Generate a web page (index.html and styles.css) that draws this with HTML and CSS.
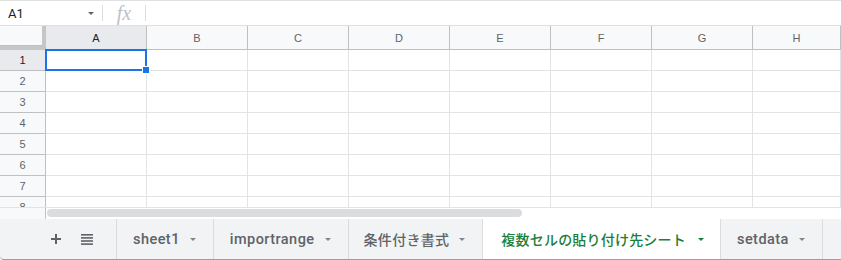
FILE: index.html
```html
<!DOCTYPE html>
<html lang="ja">
<head>
<meta charset="utf-8">
<title>Sheet</title>
<link rel="stylesheet" href="styles.css">
</head>
<body>
<div class="app">
  <div class="formula-bar">
    <div class="name-box">
      <span class="name-text">A1</span>
      <span class="caret"></span>
    </div>
    <div class="fx-box"><span class="fx">fx</span></div>
    <div class="formula-input"></div>
  </div>

  <div class="sheet">
    <div class="corner"></div>
    <div class="ch sel">A</div><div class="ch">B</div><div class="ch">C</div><div class="ch">D</div><div class="ch">E</div><div class="ch">F</div><div class="ch">G</div><div class="ch">H</div>

    <div class="rh sel">1</div><div class="c a1"><div class="selection"><span class="handle"></span></div></div><div class="c"></div><div class="c"></div><div class="c"></div><div class="c"></div><div class="c"></div><div class="c"></div><div class="c"></div>
    <div class="rh">2</div><div class="c"></div><div class="c"></div><div class="c"></div><div class="c"></div><div class="c"></div><div class="c"></div><div class="c"></div><div class="c"></div>
    <div class="rh">3</div><div class="c"></div><div class="c"></div><div class="c"></div><div class="c"></div><div class="c"></div><div class="c"></div><div class="c"></div><div class="c"></div>
    <div class="rh">4</div><div class="c"></div><div class="c"></div><div class="c"></div><div class="c"></div><div class="c"></div><div class="c"></div><div class="c"></div><div class="c"></div>
    <div class="rh">5</div><div class="c"></div><div class="c"></div><div class="c"></div><div class="c"></div><div class="c"></div><div class="c"></div><div class="c"></div><div class="c"></div>
    <div class="rh">6</div><div class="c"></div><div class="c"></div><div class="c"></div><div class="c"></div><div class="c"></div><div class="c"></div><div class="c"></div><div class="c"></div>
    <div class="rh">7</div><div class="c"></div><div class="c"></div><div class="c"></div><div class="c"></div><div class="c"></div><div class="c"></div><div class="c"></div><div class="c"></div>
    <div class="rh">8</div><div class="c"></div><div class="c"></div><div class="c"></div><div class="c"></div><div class="c"></div><div class="c"></div><div class="c"></div><div class="c"></div>
  </div>

  <div class="hscroll">
    <div class="hscroll-left"></div>
    <div class="hscroll-track"><div class="thumb"></div></div>
  </div>

  <div class="tabbar">
    <div class="tab-controls">
      <svg class="icon-plus" width="10" height="10" viewBox="0 0 10 10"><rect x="4" y="0" width="2" height="10" fill="#5f6368"/><rect x="0" y="4" width="10" height="2" fill="#5f6368"/></svg>
      <svg class="icon-list" width="12" height="11" viewBox="0 0 12 11"><rect x="0" y="0" width="12" height="1.6" fill="#5f6368"/><rect x="0" y="3.1" width="12" height="1.6" fill="#5f6368"/><rect x="0" y="6.2" width="12" height="1.6" fill="#5f6368"/><rect x="0" y="9.3" width="12" height="1.6" fill="#5f6368"/></svg>
    </div>
    <div class="tab latin"><span class="tab-name">sheet1</span><span class="tab-caret"></span></div>
    <div class="tab latin"><span class="tab-name">importrange</span><span class="tab-caret"></span></div>
    <div class="tab"><span class="tab-name">条件付き書式</span><span class="tab-caret"></span></div>
    <div class="tab active"><span class="tab-name">複数セルの貼り付け先シート</span><span class="tab-caret"></span></div>
    <div class="tab latin"><span class="tab-name">setdata</span><span class="tab-caret"></span></div>
  </div>
</div>
</body>
</html>
```

FILE: styles.css
```css
* { box-sizing: border-box; }
html, body { margin: 0; padding: 0; }
body {
  width: 841px;
  height: 260px;
  overflow: hidden;
  background: #ffffff;
  font-family: Roboto, "Liberation Sans", "Noto Sans CJK JP", sans-serif;
}
.app { width: 841px; height: 260px; display: flex; flex-direction: column; }

/* formula bar */
.formula-bar {
  height: 26px;
  flex: 0 0 26px;
  display: flex;
  align-items: center;
  border-top: 1px solid #e0e0e0;
  border-bottom: 1px solid #e0e0e0;
}
.name-box {
  width: 102px;
  height: 100%;
  display: flex;
  align-items: center;
  padding-left: 8px;
}
.name-text { font-size: 13px; color: #202124; flex: 1; }
.caret {
  width: 0; height: 0;
  border-left: 3px solid transparent;
  border-right: 3px solid transparent;
  border-top: 3px solid #5f6368;
  margin-right: 8px;
}
.fx-box {
  width: 44px;
  height: 16px;
  border-left: 1px solid #dadce0;
  border-right: 1px solid #dadce0;
  display: flex;
  align-items: center;
  justify-content: center;
}
.fx {
  font-family: "Liberation Serif", serif;
  font-style: italic;
  font-size: 20px;
  color: #bdc1c6;
  line-height: 16px;
}
.formula-input { flex: 1; }

/* grid */
.sheet {
  flex: 0 0 181px;
  height: 181px;
  overflow: hidden;
  display: grid;
  grid-template-columns: 46px repeat(7, 101px) 1fr;
  grid-template-rows: 24px repeat(8, 21px);
}
.corner {
  background: #f8f9fa;
  border-right: 4px solid #c4c7c5;
  border-bottom: 4px solid #c4c7c5;
  box-shadow: inset 0 -1px 0 #c0c0c0;
}
.ch, .rh {
  background: #f8f9fa;
  border-right: 1px solid #c0c0c0;
  border-bottom: 1px solid #c0c0c0;
  font-family: "Liberation Sans", Arial, sans-serif;
  font-size: 11px;
  color: #5f6368;
  display: flex;
  align-items: center;
  justify-content: center;
}
.ch.sel, .rh.sel { background: #e8eaed; color: #202124; }
.c {
  border-right: 1px solid #e2e3e3;
  border-bottom: 1px solid #e2e3e3;
}
.a1 { position: relative; }
.selection {
  position: absolute;
  left: -1px;
  top: -1px;
  width: 102px;
  height: 22px;
  border: 2px solid #1a73e8;
}
.handle {
  position: absolute;
  right: -5px;
  bottom: -5px;
  width: 8px;
  height: 8px;
  background: #1a73e8;
  border: 1px solid #ffffff;
}

/* horizontal scroll */
.hscroll {
  flex: 0 0 12px;
  height: 12px;
  display: flex;
  border-top: 1px solid #e2e3e3;
}
.hscroll-left {
  width: 46px;
  background: #f8f9fa;
  border-right: 1px solid #c0c0c0;
}
.hscroll-track { flex: 1; padding: 1px 0 0 1px; }
.thumb {
  width: 475px;
  height: 8px;
  border-radius: 4px;
  background: #dadce0;
}

/* tabs */
.tabbar {
  flex: 0 0 41px;
  height: 41px;
  display: flex;
  background: #f1f3f4;
  border-bottom: 1px solid #9aa0a6;
  border-bottom-left-radius: 4px;
}
.tab-controls {
  width: 117px;
  border-right: 1px solid #dadce0;
  display: flex;
  align-items: center;
  padding-left: 51px;
  gap: 20px;
}
.tab {
  display: flex;
  align-items: center;
  gap: 10px;
  padding: 0 17px 0 15px;
  border-right: 1px solid #dadce0;
  font-size: 14px;
  font-weight: 500;
  color: #5f6368;
  letter-spacing: 0.3px;
}
.tab.latin {
  font-size: 14.5px;
  letter-spacing: 0.45px;
  padding: 0 17px 0 16px;
}
.tab-name { white-space: nowrap; }
.tab-caret {
  width: 0; height: 0;
  border-left: 3.5px solid transparent;
  border-right: 3.5px solid transparent;
  border-top: 3.5px solid #80868b;
}
.tab.active {
  background: #ffffff;
  color: #188038;
  padding: 0 16px 0 18px;
  gap: 12px;
  letter-spacing: 0.2px;
}
.tab.active .tab-caret { border-top-color: #188038; }
```
